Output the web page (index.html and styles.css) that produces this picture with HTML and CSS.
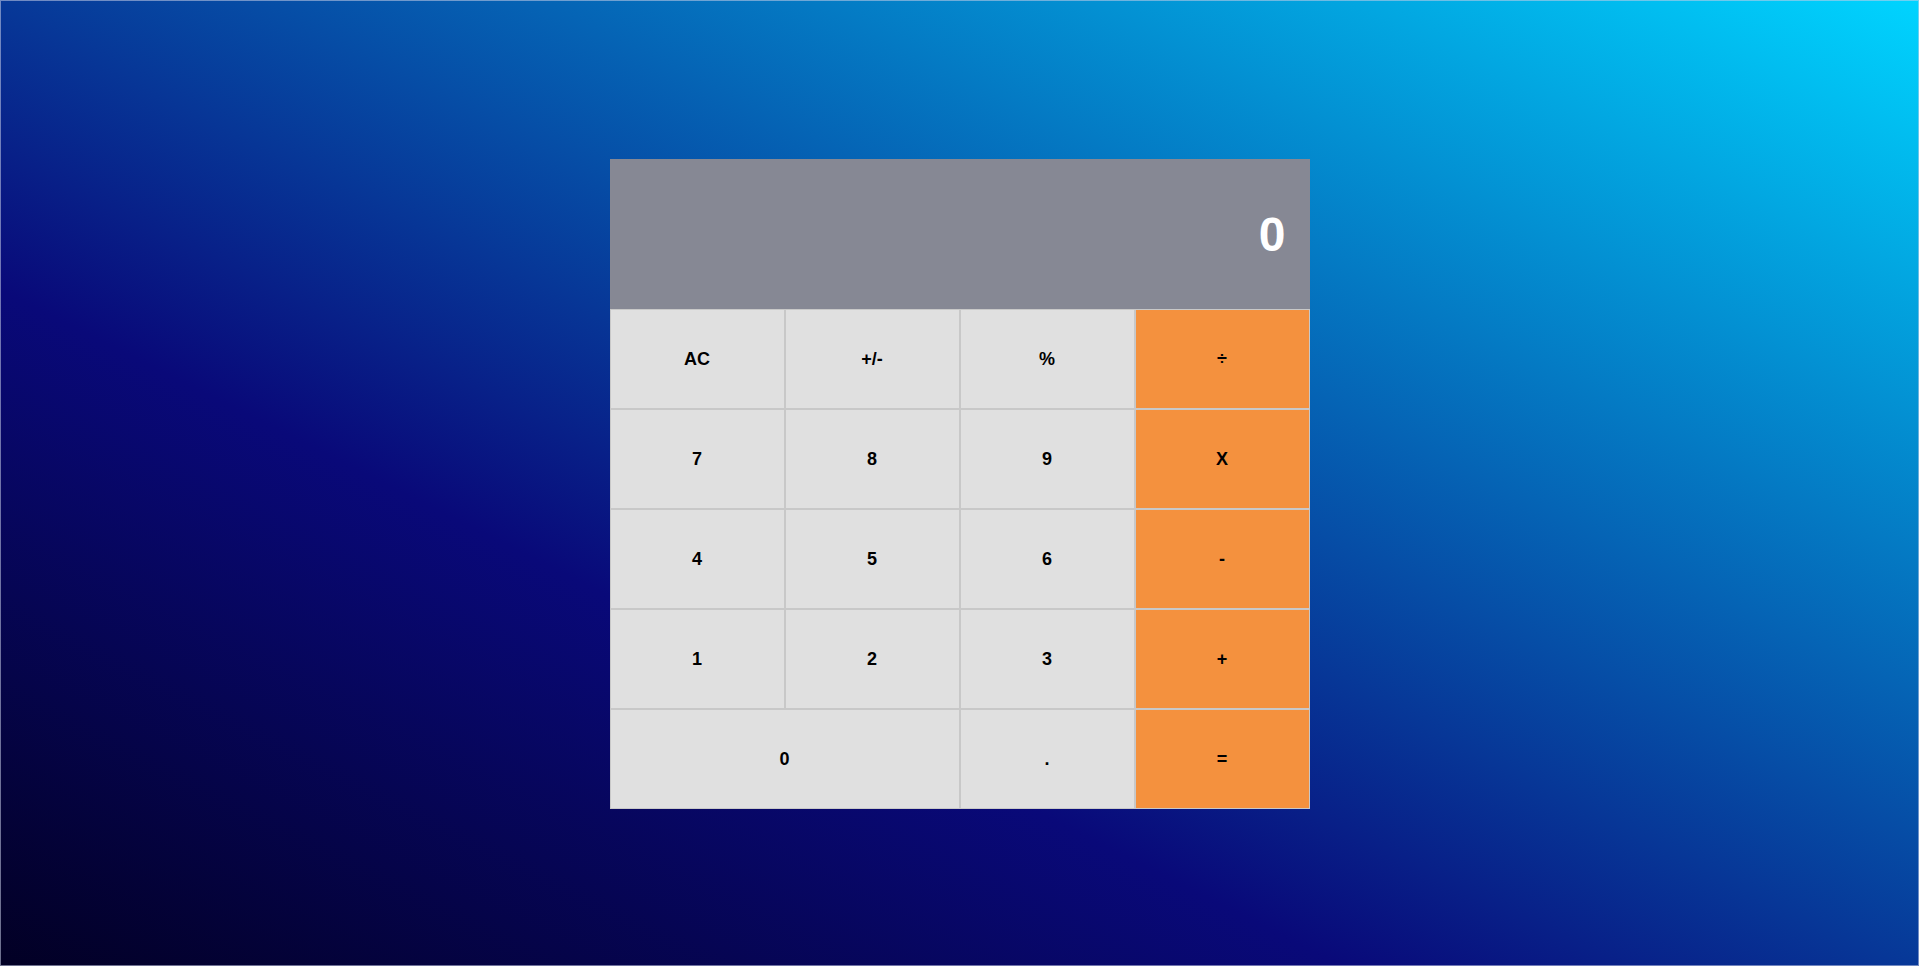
FILE: index.html
```html
<!DOCTYPE html>
<html lang="en">
<head>
<meta charset="UTF-8">
<title>Calculator</title>
<link rel="stylesheet" href="styles.css">
</head>
<body>
<div class="page">
  <div class="calculator">
    <div class="display">0</div>
    <div class="keys">
      <button class="key">AC</button>
      <button class="key">+/-</button>
      <button class="key">%</button>
      <button class="key op">÷</button>
      <button class="key">7</button>
      <button class="key">8</button>
      <button class="key">9</button>
      <button class="key op">X</button>
      <button class="key">4</button>
      <button class="key">5</button>
      <button class="key">6</button>
      <button class="key op">-</button>
      <button class="key">1</button>
      <button class="key">2</button>
      <button class="key">3</button>
      <button class="key op">+</button>
      <button class="key wide">0</button>
      <button class="key">.</button>
      <button class="key op">=</button>
    </div>
  </div>
</div>
</body>
</html>
```

FILE: styles.css
```css
* { box-sizing: border-box; }
html, body { margin: 0; padding: 0; height: 100%; }
body {
  font-family: "Liberation Sans", Arial, sans-serif;
  background: linear-gradient(to top right, #020024 0%, #090979 35%, #00d4ff 100%);
}
.page {
  height: 100vh;
  border: 1px solid rgba(200, 205, 230, 0.55);
  display: flex;
  justify-content: center;
  padding-top: 158px;
}
.calculator {
  width: 700px;
  height: 650px;
  display: flex;
  flex-direction: column;
}
.display {
  height: 150px;
  background: #868894;
  color: #fff;
  font-weight: bold;
  font-size: 48px;
  display: flex;
  align-items: center;
  justify-content: flex-end;
  padding-right: 24px;
}
.keys {
  display: grid;
  grid-template-columns: repeat(4, 175px);
  grid-auto-rows: 100px;
}
.key {
  font-family: "Liberation Sans", Arial, sans-serif;
  font-weight: bold;
  font-size: 18px;
  color: #000;
  background: #e0e0e0;
  border: 1px solid #c8c8c8;
  margin: 0;
  padding: 0;
}
.key.op { background: #f4913e; }
.key.wide { grid-column: span 2; }
```
